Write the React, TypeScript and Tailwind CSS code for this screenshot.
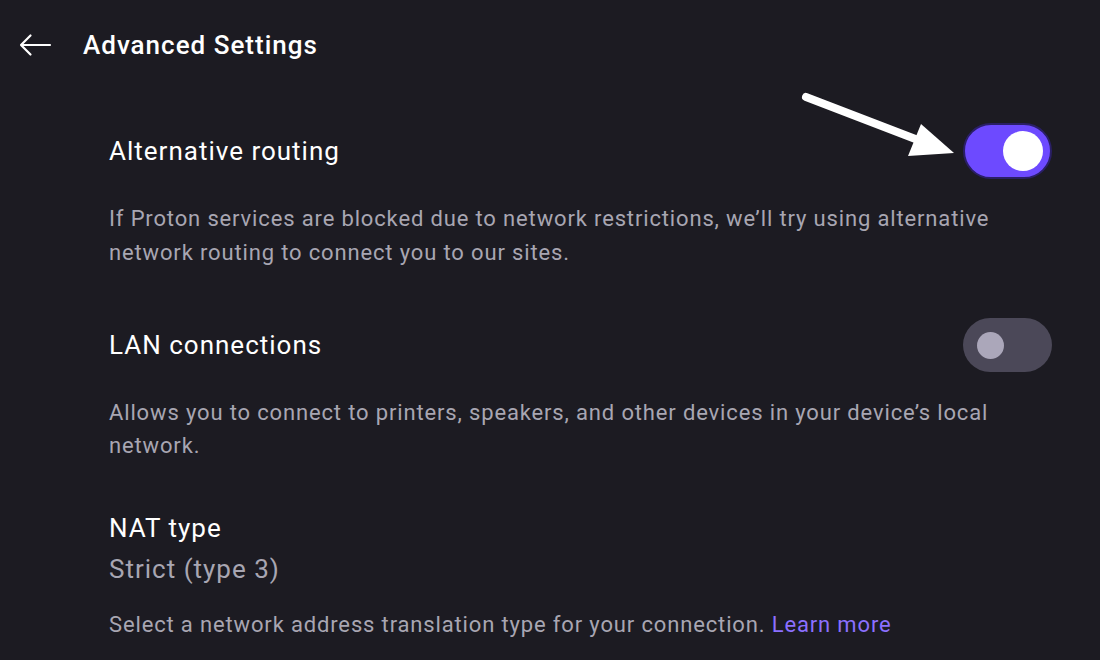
function Toggle({ on }: { on: boolean }) {
  return (
    <div
      className={
        on
          ? "w-[89px] h-[56px] rounded-full bg-[#6d4aff] border-2 border-[#2a1f66] flex items-center justify-end pr-[7px] shrink-0"
          : "w-[89px] h-[54px] rounded-full bg-[#4b4858] flex items-center justify-start pl-[14px] shrink-0"
      }
    >
      <div
        className={
          on
            ? "w-[40px] h-[40px] rounded-full bg-white"
            : "w-[27px] h-[27px] rounded-full bg-[#aba7ba]"
        }
      />
    </div>
  );
}

export default function App() {
  return (
    <div
      className="relative w-[1100px] h-[660px] overflow-hidden bg-[#1c1b22] text-white"
      style={{ fontFamily: "Roboto, 'Liberation Sans', sans-serif" }}
    >
      <header className="h-[90px] flex items-center">
        <svg width="34" height="24" viewBox="0 0 34 24" className="ml-[18px]">
          <path d="M3 12h29M12.5 2.5L3 12l9.5 9.5" fill="none" stroke="white" strokeWidth="2.2" strokeLinecap="round" strokeLinejoin="round" />
        </svg>
        <h1 className="ml-[31px] text-[26px] font-medium tracking-[1px]">Advanced Settings</h1>
      </header>

      <div className="pl-[109px] pr-[48px]">
        <div className="mt-[33px] flex items-center justify-between">
          <span className="text-[26px] leading-[56px] tracking-[1px]">Alternative routing</span>
          <Toggle on />
        </div>
        <p className="mt-[23px] text-[22px] leading-[34px] text-[#a8a6b2] tracking-[0.85px]">
          If Proton services are blocked due to network restrictions, we’ll try using alternative
          <br />
          network routing to connect you to our sites.
        </p>

        <div className="mt-[48px] flex items-center justify-between">
          <span className="text-[26px] leading-[54px] tracking-[1px]">LAN connections</span>
          <Toggle on={false} />
        </div>
        <p className="mt-[24px] text-[22px] leading-[33px] text-[#a8a6b2] tracking-[0.85px]">
          Allows you to connect to printers, speakers, and other devices in your device’s local
          <br />
          network.
        </p>

        <div className="mt-[50px] text-[26px] leading-[32px] tracking-[1px]">NAT type</div>
        <div className="mt-[9px] text-[26px] leading-[32px] text-[#a8a6b2] tracking-[1px]">Strict (type 3)</div>
        <p className="mt-[23px] text-[22px] leading-[34px] text-[#a8a6b2] tracking-[0.85px]">
          Select a network address translation type for your connection.{" "}
          <span className="text-[#8b70ff]">Learn more</span>
        </p>
      </div>

      <svg className="absolute left-0 top-0 pointer-events-none" width="1100" height="660">
        <line x1="806" y1="97" x2="918" y2="140" stroke="white" strokeWidth="8" strokeLinecap="round" />
        <polygon points="921,124 954,153 908,156" fill="white" />
      </svg>
    </div>
  );
}
